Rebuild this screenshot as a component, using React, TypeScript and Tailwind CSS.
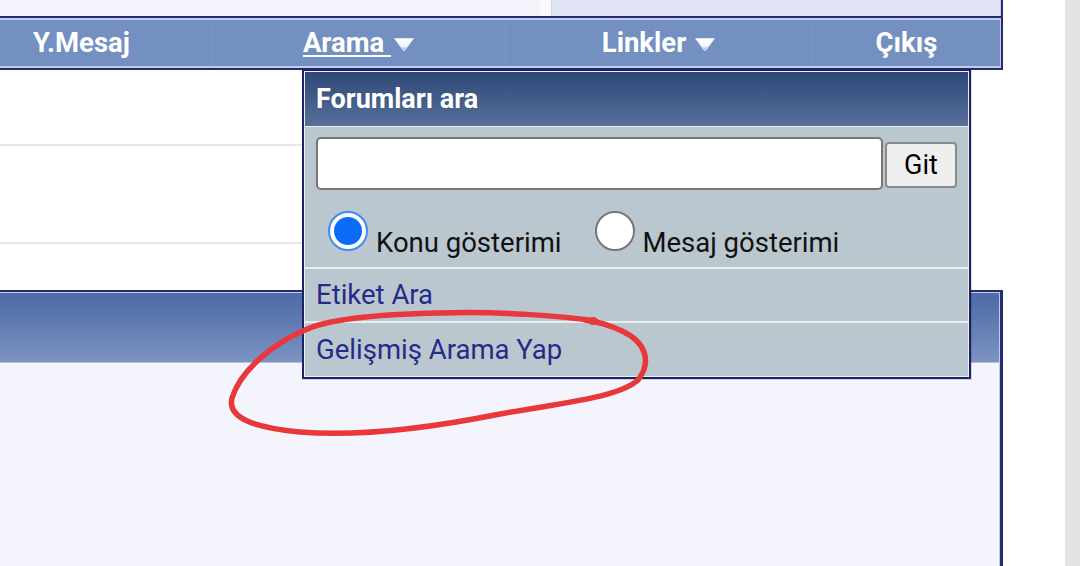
import React from 'react';

const NavArrow: React.FC<{ className?: string }> = ({ className }) => (
  <svg width="22" height="15" viewBox="0 0 22 15" className={className}>
    <defs>
      <linearGradient id="arrowShade" x1="0" y1="0" x2="0" y2="1">
        <stop offset="0" stopColor="#ffffff" />
        <stop offset="0.6" stopColor="#f4f6fb" />
        <stop offset="1" stopColor="#9aa6bf" />
      </linearGradient>
    </defs>
    <path d="M1.5 1.5 L20.5 1.5 L11.8 13.2 Q11 14.2 10.2 13.2 Z" fill="url(#arrowShade)" stroke="#dfe5f2" strokeWidth="1" strokeLinejoin="round" />
  </svg>
);

const Radio: React.FC<{ checked?: boolean }> = ({ checked }) =>
  checked ? (
    <span className="flex w-[40px] h-[40px] shrink-0 rounded-full border-2 border-[#3f8cf0] bg-white p-[4px]">
      <span className="w-full h-full rounded-full bg-[#0b6cf7]" />
    </span>
  ) : (
    <span className="block w-[40px] h-[40px] shrink-0 rounded-full border-2 border-[#777777] bg-white" />
  );

const SearchMenu: React.FC = () => (
  <div className="absolute left-[302px] top-[69px] w-[669px] border-2 border-[#1d2361] bg-[#bbc7ce] shadow-[1px_1px_0_rgba(0,0,0,0.15)]">
    <div className="border border-[#e9eef2]">
      <div className="h-[55px] flex items-center pl-[11px] bg-gradient-to-b from-[#2e4878] to-[#586f99] border-b border-[#e9eef2]">
        <span className="text-white font-bold text-[27px] leading-none">Forumları ara</span>
      </div>

      <div className="h-[142px] px-[11px] pt-[10px] border-b-2 border-[#e8edf0]">
        <div className="flex items-center">
          <div className="w-[567px] h-[53px] bg-white rounded-[5px] border-2 border-[#767676]" />
          <button className="ml-[2px] mt-[3px] w-[72px] h-[46px] bg-[#efefef] rounded-[4px] border-2 border-[#8a8a8a] text-[27px] text-black leading-none">
            Git
          </button>
        </div>
        <div className="mt-[21px] ml-[12px] flex items-start text-[27.5px] text-[#111111]">
          <Radio checked />
          <span className="ml-[8px] mt-[11px]">Konu gösterimi</span>
          <span className="ml-[34px]">
            <Radio />
          </span>
          <span className="ml-[7px] mt-[11px]">Mesaj gösterimi</span>
        </div>
      </div>

      <div className="h-[54px] flex items-center px-[11px] border-b-2 border-[#e8edf0] text-[27.5px] text-[#262b8a]">
        Etiket Ara
      </div>
      <div className="h-[53px] flex items-center px-[11px] text-[27.5px] text-[#262b8a]">
        Gelişmiş Arama Yap
      </div>
    </div>
  </div>
);

const App: React.FC = () => {
  return (
    <div className="relative w-[1080px] h-[566px] overflow-hidden bg-white flex font-['Roboto',sans-serif]">
      <div className="w-[1003px] flex flex-col">
        {/* end of the table above */}
        <div className="h-[16px] flex border-r-2 border-[#262c70]">
          <div className="w-[540px] bg-[#f4f4fc]" />
          <div className="w-[12px] bg-[#fafafd] border-r border-[#cfd4ea]" />
          <div className="flex-1 bg-[#dfe3f3] border-r border-[#c3cbec]" />
        </div>

        {/* navbar */}
        <div className="h-[54px] border-y-2 border-r-2 border-[#262c70]">
          <div className="h-full flex border-y-2 border-r border-[#c3cbec] bg-[#7390c0] text-white font-bold text-[27.5px]">
            <div className="w-[212px] flex items-center pl-[33px]">Y.Mesaj</div>
            <div className="w-[293px] flex items-center justify-center border-l border-[#7c97c6]">
              <span className="underline decoration-2 underline-offset-[3px]">Arama&nbsp;</span>
              <NavArrow className="ml-[2px] mt-[2px]" />
            </div>
            <div className="w-[307px] flex items-center justify-center border-l border-[#7c97c6]">
              <span>Linkler</span>
              <NavArrow className="ml-[8px] mt-[2px]" />
            </div>
            <div className="flex-1 flex items-center justify-center border-l border-[#7c97c6]">Çıkış</div>
          </div>
        </div>

        {/* white rows */}
        <div className="h-[220px] flex flex-col bg-white">
          <div className="h-[76px] border-b-2 border-[#e6e6e6] mr-[33px]" />
          <div className="h-[98px] border-b-2 border-[#e6e6e6] mr-[33px]" />
          <div className="flex-1" />
        </div>

        {/* lower panel */}
        <div className="flex-1 flex flex-col border-t-2 border-r-[3px] border-[#262c70]">
          <div className="flex-1 flex flex-col border-t border-r border-[#c3cbec]">
            <div className="h-[70px] bg-gradient-to-b from-[#4c6aa6] to-[#7c93c2] border-b border-[#b6c2de]" />
            <div className="flex-1 bg-[#f4f4fd]" />
          </div>
        </div>
      </div>

      <div className="flex-1 bg-white" />
      <div className="w-[15px] bg-[#e3e3e3]" />

      <SearchMenu />

      {/* hand-drawn red circle */}
      <svg className="absolute inset-0 pointer-events-none" width="1080" height="566" viewBox="0 0 1080 566">
        <path
          d="M596 321 C560 316, 500 311, 440 313 C390 314, 330 318, 305 330 C270 345, 240 372, 232 398 C227 418, 255 428, 300 432 C360 437, 430 428, 500 414 C560 403, 618 398, 638 380 C652 362, 646 342, 622 331 C607 324, 594 321, 585 320"
          fill="none"
          stroke="#e8383b"
          strokeWidth="5.5"
          strokeLinecap="round"
          strokeLinejoin="round"
        />
        <circle cx="593" cy="321" r="4" fill="#e8383b" />
      </svg>
    </div>
  );
};

export default App;
